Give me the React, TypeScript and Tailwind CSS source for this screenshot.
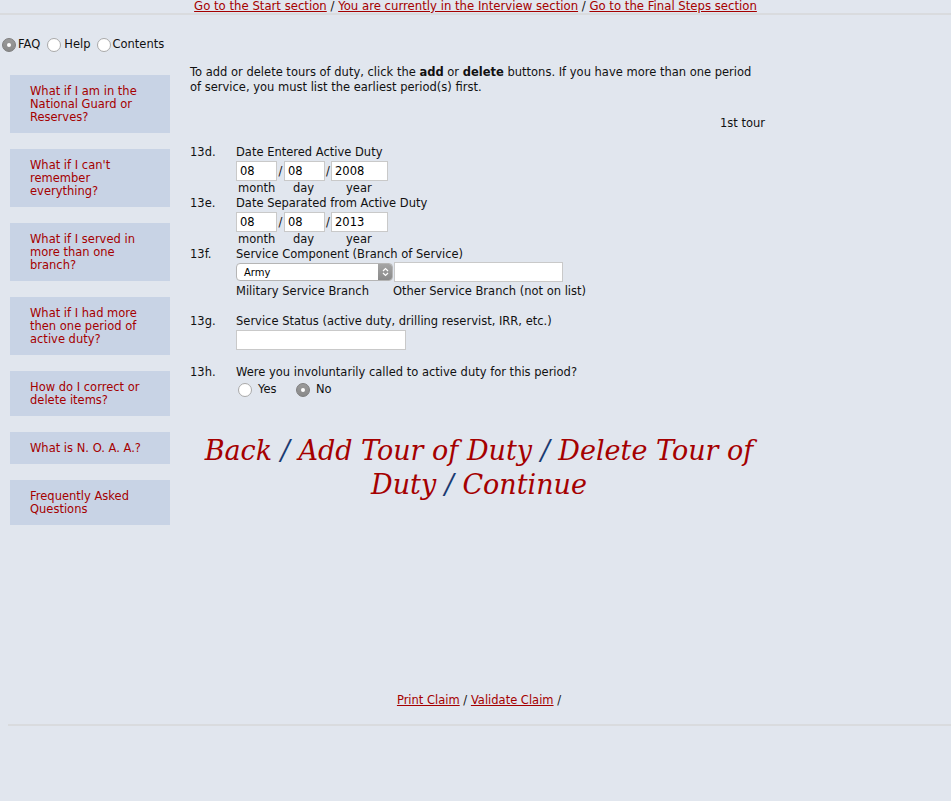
import React from "react";

const RED = "text-[#a50000]";

function Radio({ checked }: { checked?: boolean }) {
  return checked ? (
    <span className="inline-flex h-[14px] w-[14px] items-center justify-center rounded-full border border-[#7d7d7d] bg-gradient-to-b from-[#9a9a9a] to-[#8a8a8a]">
      <span className="h-[4px] w-[4px] rounded-full bg-white" />
    </span>
  ) : (
    <span className="inline-block h-[14px] w-[14px] rounded-full border border-[#a9a9a9] bg-white" />
  );
}

function Box({ children }: { children: React.ReactNode }) {
  return (
    <div className={`w-[160px] bg-[#c8d3e5] pl-[20px] pr-[4px] pt-[10px] pb-[9px] text-[11.5px] leading-[13px] ${RED}`}>
      {children}
    </div>
  );
}

function TextInput({ w, value }: { w: string; value?: string }) {
  return (
    <div className={`${w} h-[20px] border border-[#c9c9c9] bg-white pl-[3px] text-[11.5px] leading-[18px] text-black`}>
      {value}
    </div>
  );
}

function DateRow({ m, d, y }: { m: string; d: string; y: string }) {
  return (
    <div>
      <div className="flex h-[20px] items-center">
        <TextInput w="w-[41px]" value={m} />
        <span className="w-[7px] text-center">/</span>
        <TextInput w="w-[41px]" value={d} />
        <span className="w-[6px] text-center">/</span>
        <TextInput w="w-[57px]" value={y} />
      </div>
      <div className="flex h-[15px] items-center pl-[2px]">
        <span className="w-[55px]">month</span>
        <span className="w-[53px]">day</span>
        <span>year</span>
      </div>
    </div>
  );
}

export default function App() {
  return (
    <div
      className="min-h-[801px] w-[951px] bg-[#e1e6ee] text-[11.5px] text-[#111]"
      style={{ fontFamily: '"DejaVu Sans", Verdana, sans-serif' }}
    >
      {/* top nav */}
      <div className="flex h-[15px] justify-center border-b-2 border-[#d9dbde] text-[11.7px] leading-[13px]">
        <span className="whitespace-nowrap">
          <a className={`${RED} underline`}>Go to the Start section</a> /{" "}
          <a className={`${RED} underline`}>You are currently in the Interview section</a> /{" "}
          <a className={`${RED} underline`}>Go to the Final Steps section</a>
        </span>
      </div>

      {/* radio row */}
      <div className="mt-[23px] flex h-[14px] items-center pl-[2px]">
        <Radio checked />
        <span className="ml-[2px] mr-[7px]">FAQ</span>
        <Radio />
        <span className="ml-[3px] mr-[6px]">Help</span>
        <Radio />
        <span className="ml-[2px]">Contents</span>
      </div>

      <div className="flex">
        {/* sidebar */}
        <div className="ml-[10px] mt-[23px] flex w-[160px] flex-col gap-[16px]">
          <Box>What if I am in the<br />National Guard or<br />Reserves?</Box>
          <Box>What if I can't<br />remember<br />everything?</Box>
          <Box>What if I served in<br />more than one<br />branch?</Box>
          <Box>What if I had more<br />then one period of<br />active duty?</Box>
          <Box>How do I correct or<br />delete items?</Box>
          <Box>What is N. O. A. A.?</Box>
          <Box>Frequently Asked<br />Questions</Box>
        </div>

        {/* main */}
        <div className="ml-[20px] w-[578px]">
          <div className="mt-[13px] whitespace-nowrap leading-[15px]">
            To add or delete tours of duty, click the <b>add</b> or <b>delete</b> buttons. If you have more than one period
            <br />
            of service, you must list the earliest period(s) first.
          </div>
          <div className="mt-[21px] h-[15px] pr-[3px] text-right leading-[15px]">1st tour</div>

          <div className="mt-[14px] leading-[15px]">
            {/* 13d */}
            <div className="flex">
              <div className="w-[46px]">13d.</div>
              <div>
                <div className="h-[16px]">Date Entered Active Duty</div>
                <DateRow m="08" d="08" y="2008" />
              </div>
            </div>
            {/* 13e */}
            <div className="flex">
              <div className="w-[46px]">13e.</div>
              <div>
                <div className="h-[16px]">Date Separated from Active Duty</div>
                <DateRow m="08" d="08" y="2013" />
              </div>
            </div>
            {/* 13f */}
            <div className="flex">
              <div className="w-[46px]">13f.</div>
              <div>
                <div className="h-[15px]">Service Component (Branch of Service)</div>
                <div className="flex h-[20px] items-center">
                  <div className="flex h-[18px] w-[157px] items-stretch overflow-hidden rounded-[4px] border border-[#b5b5b5] bg-white text-[10px]">
                    <div className="flex flex-1 items-center pl-[7px] text-black">Army</div>
                    <div className="flex w-[14px] items-center justify-center bg-gradient-to-b from-[#a5a5a5] to-[#8a8a8a]">
                      <svg width="7" height="10" viewBox="0 0 7 10">
                        <path d="M1 4 L3.5 1.5 L6 4 M1 6 L3.5 8.5 L6 6" fill="none" stroke="white" strokeWidth="1.2" />
                      </svg>
                    </div>
                  </div>
                  <div className="ml-[1px]">
                    <TextInput w="w-[169px]" />
                  </div>
                </div>
                <div className="mt-[2px] flex h-[15px] items-center">
                  <span className="w-[157px]">Military Service Branch</span>
                  <span>Other Service Branch (not on list)</span>
                </div>
              </div>
            </div>
            {/* 13g */}
            <div className="mt-[15px] flex">
              <div className="w-[46px]">13g.</div>
              <div>
                <div className="h-[16px]">Service Status (active duty, drilling reservist, IRR, etc.)</div>
                <TextInput w="w-[170px]" />
              </div>
            </div>
            {/* 13h */}
            <div className="mt-[15px] flex">
              <div className="w-[46px]">13h.</div>
              <div>
                <div className="h-[17px]">Were you involuntarily called to active duty for this period?</div>
                <div className="flex h-[15px] items-center pl-[2px]">
                  <Radio />
                  <span className="ml-[6px] w-[38px]">Yes</span>
                  <Radio checked />
                  <span className="ml-[6px]">No</span>
                </div>
              </div>
            </div>
          </div>

          {/* big links */}
          <div
            className="mt-[37px] whitespace-nowrap text-center text-[27px] italic leading-[34px]"
            style={{ fontFamily: '"DejaVu Serif", Georgia, serif' }}
          >
            <span className={RED}>Back</span> <span className="text-[#1b3a72]">/</span>{" "}
            <span className={RED}>Add Tour of Duty</span> <span className="text-[#1b3a72]">/</span>{" "}
            <span className={RED}>Delete Tour of</span>
            <br />
            <span className={RED}>Duty</span> <span className="text-[#1b3a72]">/</span>{" "}
            <span className={RED}>Continue</span>
          </div>

          <div className="mt-[191px] text-center leading-[15px]">
            <a className={`${RED} underline`}>Print Claim</a> /{" "}
            <a className={`${RED} underline`}>Validate Claim</a> /
          </div>
        </div>
      </div>

      <div className="ml-[8px] mt-[16px] border-b-2 border-[#d9dbde]" />
    </div>
  );
}
